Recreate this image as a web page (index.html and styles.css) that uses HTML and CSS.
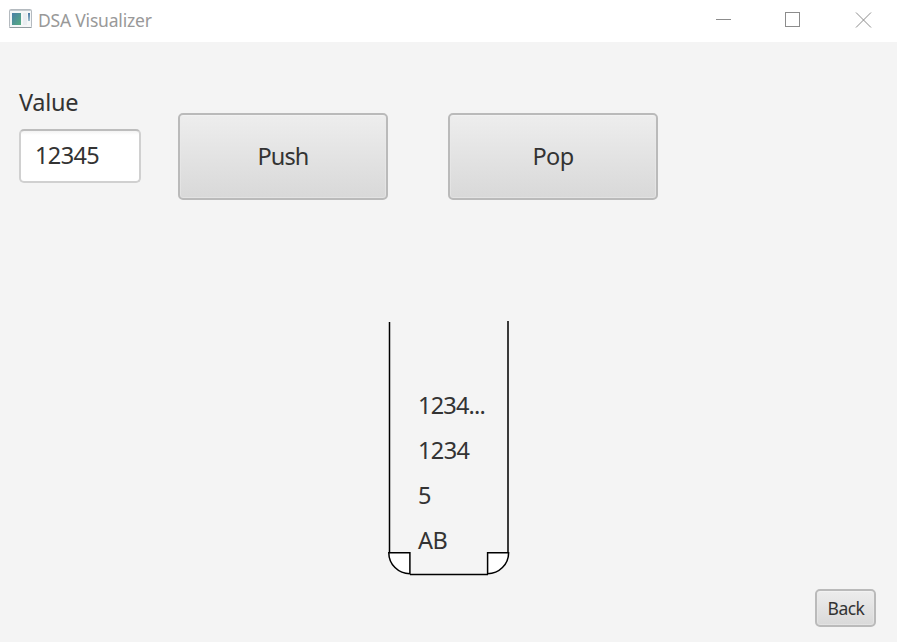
FILE: index.html
```html
<!DOCTYPE html>
<html lang="en">
<head>
<meta charset="utf-8">
<title>DSA Visualizer</title>
<link rel="stylesheet" href="styles.css">
</head>
<body>
<header class="titlebar">
  <svg class="app-icon" width="24" height="20" viewBox="0 0 24 20">
    <defs>
      <linearGradient id="pane" x1="0" y1="0" x2="1" y2="1">
        <stop offset="0" stop-color="#4a7fa8"/><stop offset="1" stop-color="#55ad80"/>
      </linearGradient>
      <linearGradient id="bar" x1="0" y1="0" x2="0" y2="1">
        <stop offset="0" stop-color="#4878a4"/><stop offset="1" stop-color="#9fc0cf"/>
      </linearGradient>
    </defs>
    <rect x=".5" y=".5" width="22" height="18" rx="1" fill="#f5f7f8" stroke="#b4babf"/>
    <path d="M1 1.5h21" stroke="#c4cbd0"/>
    <path d="M.5 18.5h22" stroke="#929ba0"/>
    <rect x="3" y="4" width="9" height="12" fill="url(#pane)"/>
    <rect x="14" y="4" width="4" height="12" fill="#e9edf1"/>
    <rect x="19" y="4" width="2" height="8" fill="url(#bar)"/>
  </svg>
  <span class="title">DSA Visualizer</span>
  <svg class="window-controls" width="158" height="18" viewBox="0 0 158 18" fill="none" stroke="#8c8c8c">
    <path d="M1 8.500h15"/>
    <rect x="70.500" y="1.500" width="14" height="14"/>
    <path d="M141 1.500l15 15M156 1.500l-15 15"/>
  </svg>
</header>
<main class="scene">
  <section class="controls">
    <div class="field">
      <label class="label" for="value">Value</label>
      <input class="input" id="value" type="text" value="12345">
    </div>
    <button class="button push">Push</button>
    <button class="button pop">Pop</button>
  </section>
  <section class="stack">
    <svg class="vessel" width="124" height="258" viewBox="0 0 124 258" fill="none" stroke="#000" stroke-width="1.5">
      <path d="M2.500 2V233"/>
      <path d="M121 1V233" stroke="#3a3a3a" stroke-width="2"/>
      <path d="M23 254.400H101"/>
      <path d="M1.800 232.700H22.900V253.700A21.100 21 0 0 1 1.800 232.700Z" fill="#fff"/>
      <path d="M121.600 232.700H100.600V253.700A21 21 0 0 0 121.600 232.700Z" fill="#fff"/>
    </svg>
    <ul class="items">
      <li class="clipped">1234...</li>
      <li>1234</li>
      <li>5</li>
      <li>AB</li>
    </ul>
  </section>
  <footer class="footer"><button class="button back">Back</button></footer>
</main>
</body>
</html>
```
FILE: styles.css
```css
* { box-sizing: border-box; }
body {
  margin: 0;
  width: 897px;
  height: 642px;
  overflow: hidden;
  background: #f4f4f4;
  color: #333;
  font: 23.5px "Noto Sans", "Open Sans", sans-serif;
}
.titlebar {
  display: flex;
  height: 42px;
  padding: 9px 24px 0 9px;
  background: #fff;
}
.title {
  margin-left: 5px;
  color: #999;
  font-size: 17.5px;
  line-height: 23px;
  letter-spacing: -0.2px;
}
.window-controls { margin: 2px 0 0 auto; }
.scene {
  display: flex;
  flex-direction: column;
  height: 600px;
}
.controls {
  display: flex;
  align-items: flex-end;
  height: 158px;
  padding-left: 19px;
}
.field {
  display: flex;
  flex-direction: column;
  width: 122px;
  margin: 0 37px 17px 0;
}
.label {
  height: 43px;
  line-height: 32px;
  letter-spacing: -0.3px;
}
.input {
  width: 122px;
  height: 54px;
  padding: 0 14px 2px;
  border: 2px solid #d0d0d0;
  border-top-color: #bdbdbd;
  border-radius: 5px;
  background: linear-gradient(#f3f3f3, #fff 4px);
  color: #333;
  font: inherit;
  letter-spacing: -0.6px;
}
.button {
  width: 210px;
  height: 87px;
  padding: 0 0 1px;
  border: 2px solid #bababa;
  border-radius: 5px;
  background: linear-gradient(#eee, #d8d8d8) border-box;
  box-shadow: inset 0 0 0 1px #eaeaea88, inset 0 1px 0 #fafafa;
  color: #333;
  font: inherit;
}
.push { letter-spacing: -0.9px; }
.pop {
  margin-left: 60px;
  letter-spacing: -0.6px;
}
.stack {
  position: relative;
  width: 124px;
  height: 258px;
  margin: 120px 0 0 387px;
}
.vessel { position: absolute; inset: 0; }
.items {
  position: relative;
  margin: 0;
  padding: 63px 0 0 31px;
  list-style: none;
  line-height: 45px;
  letter-spacing: -0.6px;
}
.clipped { letter-spacing: -0.8px; }
.footer {
  display: flex;
  justify-content: flex-end;
  margin: 11px 21px 0 0;
}
.back {
  width: 61px;
  height: 38px;
  padding: 0 0 0 1px;
  font-size: 17.5px;
  letter-spacing: -0.5px;
}
```
